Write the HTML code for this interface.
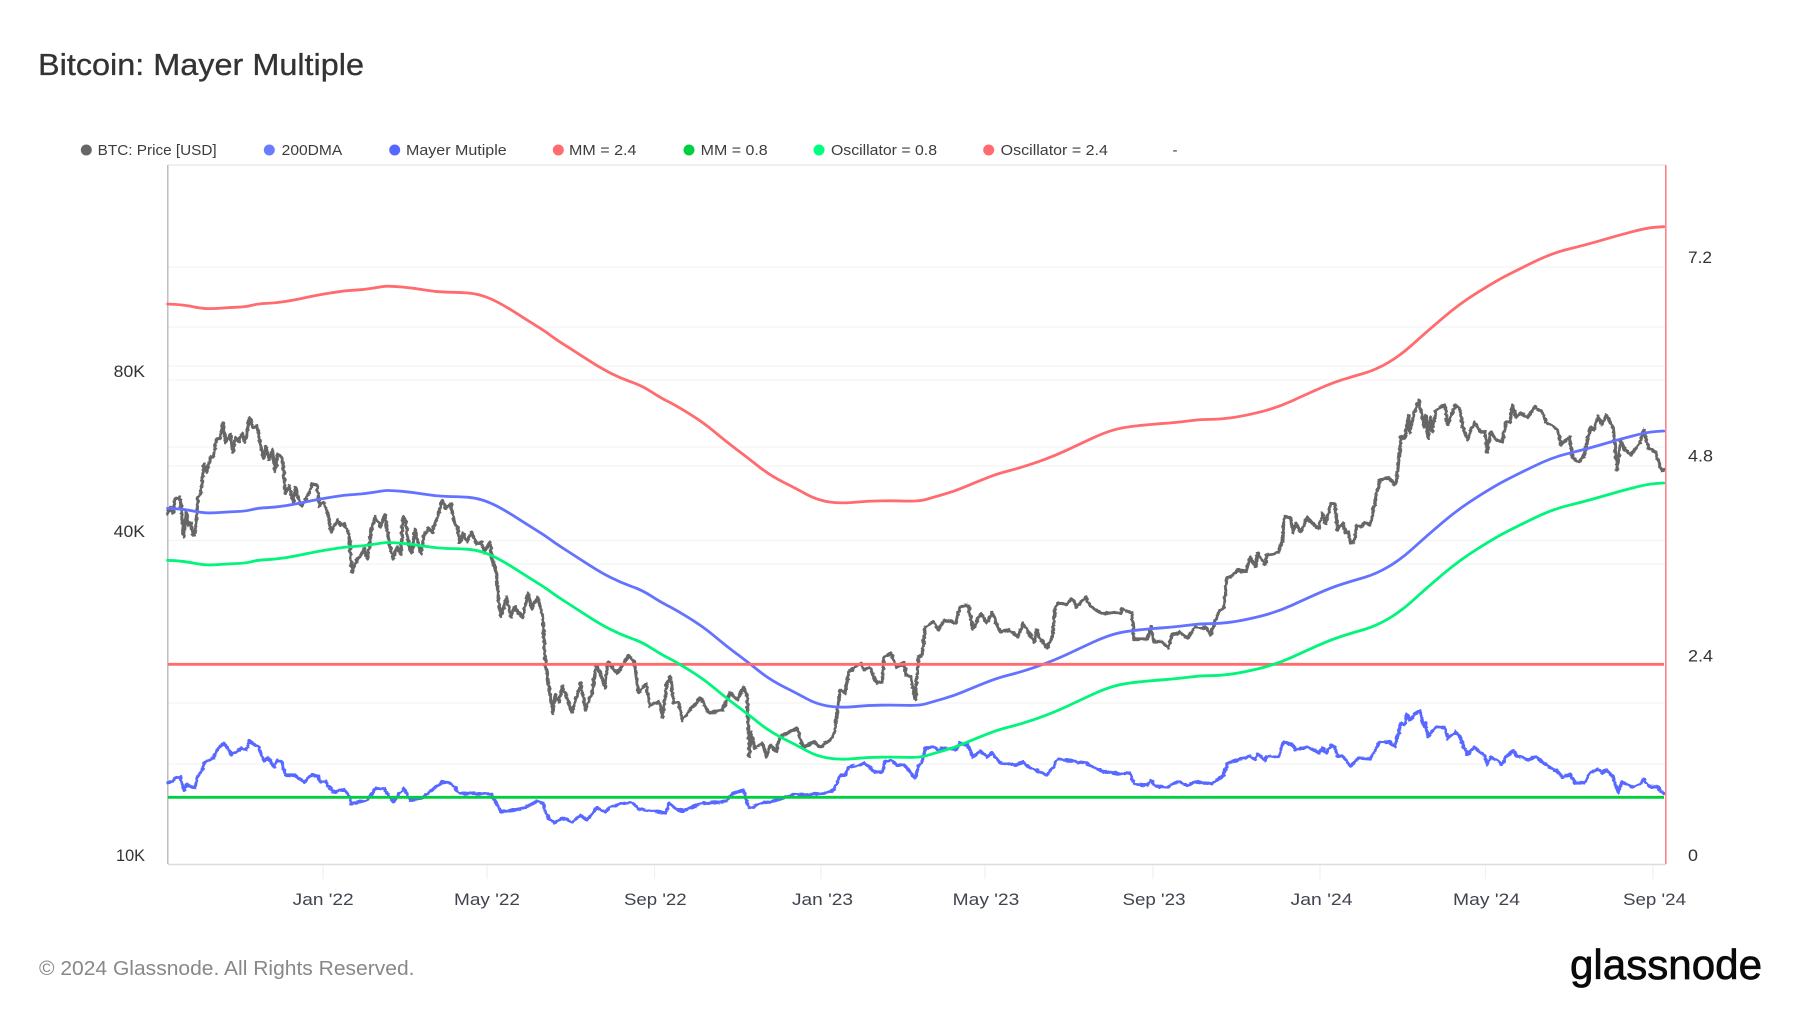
<!DOCTYPE html>
<html><head><meta charset="utf-8"><title>Bitcoin: Mayer Multiple</title>
<style>
html,body{margin:0;padding:0;background:#fff;width:1800px;height:1013px;overflow:hidden}
svg{display:block}
text{font-family:"Liberation Sans",sans-serif}
.leg{font-size:15px;fill:#3d3d3d}
.ax{font-size:16.5px;fill:#333}
.xl{font-size:16.5px;fill:#40444f;text-anchor:middle}
.line{fill:none;stroke-linejoin:round;stroke-linecap:round}
</style></head><body>
<svg width="1800" height="1013" viewBox="0 0 1800 1013" xmlns="http://www.w3.org/2000/svg">
<text x="38" y="75" font-size="31" fill="#333" stroke="#333" stroke-width="0.3" textLength="326" lengthAdjust="spacingAndGlyphs">Bitcoin: Mayer Multiple</text>

<circle cx="86.3" cy="150" r="5.5" fill="#666"/><text class="leg" x="97.7" y="155" textLength="119" lengthAdjust="spacingAndGlyphs">BTC: Price [USD]</text>
<circle cx="269.3" cy="150" r="5.5" fill="#6b7bff"/><text class="leg" x="281.7" y="155" textLength="60.6" lengthAdjust="spacingAndGlyphs">200DMA</text>
<circle cx="394.7" cy="150" r="5.5" fill="#5668ff"/><text class="leg" x="406" y="155" textLength="100.7" lengthAdjust="spacingAndGlyphs">Mayer Mutiple</text>
<circle cx="558.3" cy="150" r="5.5" fill="#ff6b6e"/><text class="leg" x="569" y="155" textLength="67.4" lengthAdjust="spacingAndGlyphs">MM = 2.4</text>
<circle cx="689" cy="150" r="5.5" fill="#00cf3f"/><text class="leg" x="700.7" y="155" textLength="67" lengthAdjust="spacingAndGlyphs">MM = 0.8</text>
<circle cx="819" cy="150" r="5.5" fill="#00ff80"/><text class="leg" x="831" y="155" textLength="106" lengthAdjust="spacingAndGlyphs">Oscillator = 0.8</text>
<circle cx="988.7" cy="150" r="5.5" fill="#ff6b6e"/><text class="leg" x="1000.7" y="155" textLength="107.2" lengthAdjust="spacingAndGlyphs">Oscillator = 2.4</text>
<text class="leg" x="1172.5" y="155">-</text>

<g stroke="#f3f3f3" stroke-width="1.3">
<path d="M168 267H1666M168 327H1666M168 366H1666M168 380H1666M168 447H1666M168 466H1666M168 540.5H1666M168 564H1666M168 703H1666M168 764H1666"/>
</g>
<path d="M168 165H1666" stroke="#ececec" stroke-width="1.6"/>
<path d="M168 864.5H1666" stroke="#dcdcdc" stroke-width="1.6"/>
<path d="M167.8 165V864" stroke="#b8b8b8" stroke-width="1.4"/>
<g stroke="#f0f0f0" stroke-width="1.2">
<path d="M323 865V879M487 865V879M654.5 865V879M821 865V879M985 865V879M1153 865V879M1320 865V879M1485.5 865V879M1653 865V879"/>
</g>

<defs>
<filter id="jit" filterUnits="userSpaceOnUse" x="150" y="380" width="1530" height="450" color-interpolation-filters="sRGB">
<feTurbulence type="fractalNoise" baseFrequency="0.16 0.28" numOctaves="2" seed="4" result="n"/>
<feDisplacementMap in="SourceGraphic" in2="n" scale="3.5" xChannelSelector="G" yChannelSelector="R"/>
<feGaussianBlur stdDeviation="0.35"/>
</filter>
<path id="dma" d="M167.6 508.3Q183.7 509 192.4 510.9Q201 512.7 207.5 512.9Q214 513 221.8 512.4Q229.6 511.7 237.3 511.5Q245 511.3 251.5 509.7Q258 508 266.8 507.7Q275.5 507.3 285.1 505.8Q294.7 504.3 306.2 501.8Q317.6 499.3 331 497.2Q344.4 495 354 494.5Q363.6 494 373.2 492.4Q382.7 490.7 386.6 490.5Q390.4 490.3 401.9 491.3Q413.3 492.3 424.8 494.3Q436.3 496.3 447.8 496.5Q459.2 496.7 466.9 497.2Q474.5 497.7 482.2 500Q489.9 502.3 499.5 507.5Q509 512.7 518.5 518.9Q528 525 536.7 530.4Q545.3 535.7 551 540Q556.8 544.3 567.4 551Q577.9 557.7 589 564.9Q600 572 610.5 577.4Q621 582.7 631.5 586.4Q642 590 651.5 596.2Q661 602.3 667.8 605.7Q674.6 609 689 617.9Q703.3 626.7 714.8 636.4Q726.3 646 736.8 653.9Q747.3 661.7 758.8 670.9Q770.3 680 783.7 686.7Q797 693.3 806.6 698.7Q816.2 704 827.7 706Q839.2 708 853.6 706.7Q867.9 705.3 881.3 705.2Q894.7 705 907.2 705.4Q919.6 705.7 926.3 703.7Q933 701.7 943.5 698.7Q954 695.7 963.5 691.7Q973 687.7 985.5 682.7Q998 677.7 1009.5 674.9Q1021 672 1037.3 666.4Q1053.5 660.7 1067.8 654Q1082 647.3 1093.5 642Q1105 636.7 1114.7 634Q1124.3 631.3 1139.7 629.8Q1155 628.3 1164.5 627.7Q1174 627 1187 625.4Q1200 623.7 1209.5 623.7Q1219 623.7 1230.5 622.2Q1242 620.7 1259.3 616.5Q1276.5 612.3 1291.8 605.3Q1307 598.3 1319.5 592.8Q1332 587.3 1342.5 584Q1353 580.7 1364.5 577.4Q1376 574 1388.5 566.7Q1401 559.3 1413.4 548Q1425.8 536.7 1442.9 522.2Q1460 507.7 1477.4 496.9Q1494.7 486 1504.3 481Q1513.8 476 1532.9 466.7Q1552 457.3 1569.3 453.2Q1586.5 449 1601.8 444.5Q1617 440 1632.4 436Q1647.7 432 1655.8 431.5L1663.8 431"/>
</defs>

<path class="line" filter="url(#jit)" stroke="#666" stroke-width="3.3" d="M167.6 513L170.3 508L173 513L175.3 498L179.9 497L181.4 510L183.7 537L186.4 513L188.7 526L190.6 522L193.3 535L195.6 530L197.9 498L200.9 493L204 464L206.7 472L210.5 457L213.5 457L216.6 439L220.4 438L223 423L225.8 443L230.4 434L232.7 452L235.7 437L239 442L241.9 433L245 442L249.5 418L252.6 427L257 426L260 443L263.3 458L266 447L269 460L272.5 450L274.8 472L277.5 454L282.4 458L285.5 493L289.3 486L293 502L295.8 487L299.3 502L302.3 506L309 493L311.9 484L316.9 485L319.6 506L323.4 502L327 510L331.4 532L337.5 520L340.6 525L344.4 524L349 535L352 572L356 561L361.7 554L364.3 549L367.4 559L371.2 530L375 517L380.8 527L385 515L388.4 538L393 559L396.9 547L400.7 554L403 517L405.7 520L408.3 543L411.8 553L414.8 530L421 554L424 535L428.6 528L431.7 533L438.2 515L442 500L445.8 508L450.8 504L454.7 524L457.3 527L460 543L463 533L466.9 542L471.5 532L476.5 544L481.4 542L484 553L489.9 542L491.8 557L496.4 573L498.7 603L501.3 617L506.3 597L511 617L514.7 607L522.4 618L528 593L532 609L537.7 597L542.7 617L545.3 663L547.2 675L550.3 697L553 713L555 695L558.7 702L562.6 686L572 712L580.6 683L585.5 710L592.4 692L596.2 665L600 673L605 688L607.7 662L617.2 673L628.7 655L634.4 662L638.3 692L646 684L649.8 706L659.3 702L662.4 717L667 683L670.8 676L673.5 703L678.5 702L682.3 720L691.8 708L700.3 698L709 713L722.5 710L730 693L737.8 700L743.5 687L747.3 697L749.3 757L751.2 733L755 748L762.6 743L766.5 757L770.3 745L776 751L780 737L797 728L802.8 747L814.3 742L820 747L833.4 737L838 707L840.3 690L845 693L848.8 672L860.2 663L864 670L869.8 667L876.3 683L882.4 682L884 657L890.9 653L896.6 667L904.2 663L906 675L910.8 677L915.3 700L918.4 657L922.2 655L925.3 627L933 622L938.7 630L944.4 620L955.9 623L959.7 607L968 605L973 629L980.8 613L986.5 623L992.3 612L1000 632L1009.5 630L1017.9 637L1022.9 623L1028.6 632L1034.4 642L1036.3 630L1040 638L1047 648L1052.3 637L1055.4 607L1059.2 602L1065 605L1072.6 599L1076.5 607L1086 597L1089.9 606L1101.3 613L1120.5 613L1122.4 609L1132 613L1133.9 639L1147.3 639L1151 627L1153.8 642L1162.6 642L1168.3 648L1172 635L1179.8 632L1187.5 638L1195 627L1200 628L1205.7 627L1210.7 635L1215.3 620L1220 610L1224 607L1226.8 578L1230.6 577L1238.3 570L1246 571L1250.5 557L1255.5 567L1257.4 553L1265 565L1267 555L1278.5 553L1282.3 540L1284.2 517L1290 517L1293 533L1295.7 523L1300.7 532L1307 518L1318.6 529L1322.5 513L1325.5 523L1330.9 503L1334.7 504L1337.8 530L1342.7 523L1345.4 533L1348.5 532L1350.4 543L1354.2 541L1356.9 525L1360.7 527L1364.6 523L1370.3 525L1376 497L1379.9 480L1389.4 478L1394.4 485L1397 478L1401 437L1404.7 438L1408.6 415L1409.7 432L1414.3 413L1419 400L1423.9 427L1425.8 415L1428 438L1430.4 417L1432.3 432L1436 410L1445 405L1447.6 425L1455.3 405L1460 410L1463 428L1467.9 440L1474.4 422L1480.5 432L1485 432L1487 452L1490.9 432L1496.6 440L1502.3 442L1506 422L1510 422L1512.7 405L1515.7 417L1521.5 413L1527.2 418L1534.9 407L1541.7 412L1546.3 422L1557.8 430L1561 445L1569.3 437L1573 458L1578.9 462L1584.6 455L1590.4 427L1594.2 430L1598 416L1601.8 425L1606.4 415L1613.3 428L1617 470L1621 440L1624.8 450L1630.5 455L1640 443L1643.9 430L1648.5 448L1655.4 452L1661 470L1663.8 470"/>

<use href="#dma" class="line" stroke="#6473ff" stroke-width="2.8"/>

<path class="line" filter="url(#jit)" stroke="#5668ff" stroke-width="3.2" d="M167.6 782.7L172 781.7L176.8 776.7L180.6 776.7L183.7 790L186.8 785L195 788L197.9 775L201 773L204 763L214.3 757L217 750L223.9 743L231.5 755L241.9 748L246 750L249.5 741L258.3 747L264 761L267.9 758L274.4 767L277.5 760L282 762L285.5 775L294.7 775L304.2 782L311.9 775L317.6 776L320.7 783L325.3 781L333 792L344.4 790L350 797L351.3 804L367.4 800L376 788L384.6 789L393.2 802L403.6 788L410.5 800L422 798L442 782L450.6 783L459.2 793L490.8 794L501 812L525 808L536.7 801L542.5 803L548 817L554 823L562.6 818L572.3 822L581 815L586.7 820L597 808L605.6 812L611.4 806L631.5 802L638.4 809L666 813L668.8 803L674.5 808L683 811L700 804L726 801L732 794L743.4 790L749 808L763.5 803L777.8 800L795 794L803.7 795L826.6 793L833.4 790L840.3 775L845 775L848.8 767L860.2 765L864 763L875.5 772L882.4 772L885 762L890.9 760L896.6 765L904.2 765L908 770L915 778L918.4 767L922.2 761L925.3 748L933 747L938.7 750L944.4 748L955.9 750L959.7 743L967.4 745L973 757L980.8 751L986.5 757L992.3 753L1000 763L1017 765L1022.9 762L1028.6 767L1047 775L1053.5 767L1057.3 759L1072.6 761L1086 763L1101.3 771L1120.5 774L1130 773L1133.9 784L1147.3 785L1151 780L1154.8 786L1168.3 787L1174 783L1179.8 782L1187.5 786L1195 782L1200 782L1211.5 784L1223.7 775L1227.6 763L1238.3 760L1249.8 756L1255.5 760L1257.4 754L1265 760L1267 756L1278.5 757L1283.4 742L1291.8 744L1295.7 750L1307 747L1318.6 753L1322.5 748L1326.3 753L1330.9 745L1334.7 747L1337.8 757L1342.7 756L1350.4 766L1358.8 758L1370.3 759L1379.9 742L1389.4 742L1395 747L1401 723L1404.7 725L1407 713L1409.7 720L1414.3 715L1420 710L1423.9 727L1425.8 723L1428 737L1436 727L1445 728L1447.6 738L1455.3 732L1460 736L1464 748L1467.9 754L1474.4 747L1485 757L1487 765L1490.9 757L1502.3 764L1506 757L1512.7 751L1517.6 756L1529 760L1534.9 756L1546.3 765L1559.7 773L1561.7 777L1571.2 775L1575 783L1584.6 783L1590.4 773L1598 769L1601.8 773L1606.4 770L1613.3 777L1618 792L1622 782L1632.5 787L1640 784L1643.9 779L1648.5 786L1657.3 787L1663.8 794"/>

<path d="M168 664.3H1664" stroke="#ff6b6e" stroke-width="2.8"/>
<path d="M168 797.3H1664" stroke="#00cf3f" stroke-width="2.8"/>
<use href="#dma" class="line" stroke="#00f57a" stroke-width="2.8" transform="translate(0 52)"/>
<use href="#dma" class="line" stroke="#ff6b6e" stroke-width="2.8" transform="translate(0 -204.3)"/>
<path d="M1665.8 165V864" stroke="#ff7b7d" stroke-width="1.5"/>

<text class="ax" x="113.7" y="377" textLength="31.3" lengthAdjust="spacingAndGlyphs">80K</text>
<text class="ax" x="113.7" y="537" textLength="31.3" lengthAdjust="spacingAndGlyphs">40K</text>
<text class="ax" x="116" y="861" textLength="29" lengthAdjust="spacingAndGlyphs">10K</text>
<text class="ax" x="1688" y="263" textLength="24" lengthAdjust="spacingAndGlyphs">7.2</text>
<text class="ax" x="1688" y="461.7" textLength="25" lengthAdjust="spacingAndGlyphs">4.8</text>
<text class="ax" x="1688" y="661.7" textLength="25" lengthAdjust="spacingAndGlyphs">2.4</text>
<text class="ax" x="1688" y="861" textLength="10" lengthAdjust="spacingAndGlyphs">0</text>

<text class="xl" x="323.2" y="905" textLength="61" lengthAdjust="spacingAndGlyphs">Jan '22</text>
<text class="xl" x="487" y="905" textLength="66" lengthAdjust="spacingAndGlyphs">May '22</text>
<text class="xl" x="655.3" y="905" textLength="62.6" lengthAdjust="spacingAndGlyphs">Sep '22</text>
<text class="xl" x="822.5" y="905" textLength="61" lengthAdjust="spacingAndGlyphs">Jan '23</text>
<text class="xl" x="986" y="905" textLength="66.6" lengthAdjust="spacingAndGlyphs">May '23</text>
<text class="xl" x="1154" y="905" textLength="63" lengthAdjust="spacingAndGlyphs">Sep '23</text>
<text class="xl" x="1321.5" y="905" textLength="62" lengthAdjust="spacingAndGlyphs">Jan '24</text>
<text class="xl" x="1486.5" y="905" textLength="67" lengthAdjust="spacingAndGlyphs">May '24</text>
<text class="xl" x="1654.5" y="905" textLength="63" lengthAdjust="spacingAndGlyphs">Sep '24</text>

<text x="39" y="975" font-size="20" fill="#888" textLength="375.5" lengthAdjust="spacingAndGlyphs">© 2024 Glassnode. All Rights Reserved.</text>
<text x="1570" y="979" font-size="42" fill="#0a0a0a" stroke="#0a0a0a" stroke-width="0.7" textLength="192" lengthAdjust="spacingAndGlyphs">glassnode</text>
</svg>
</body></html>
